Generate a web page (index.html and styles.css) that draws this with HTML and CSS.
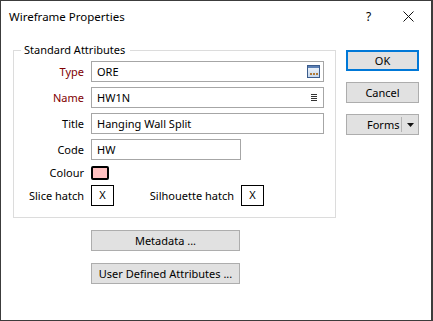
FILE: index.html
```html
<!DOCTYPE html>
<html>
<head>
<meta charset="utf-8">
<link rel="stylesheet" href="styles.css">
</head>
<body>
<div class="window">
  <div class="titlebar">
    <span class="title">Wireframe Properties</span>
    <span class="help">?</span>
    <span class="close">
      <svg width="11" height="11" viewBox="0 0 11 11"><path d="M0.5 0.5 L10.5 10.5 M10.5 0.5 L0.5 10.5" stroke="#111" stroke-width="1" fill="none"/></svg>
    </span>
  </div>
  <div class="content">
    <div class="main">
      <fieldset class="group">
        <legend>Standard Attributes</legend>
        <div class="form">
          <label class="lbl req">Type</label>
          <div class="field full"><span class="val">ORE</span>
            <svg class="ico-browse" width="13" height="13" viewBox="0 0 13 13">
              <defs><linearGradient id="g" x1="0" y1="0" x2="0" y2="1"><stop offset="0" stop-color="#f4f8fc"/><stop offset="1" stop-color="#c4d6ec"/></linearGradient></defs>
              <rect x="0.5" y="0.5" width="12" height="12" fill="url(#g)" stroke="#3b5c8c"/>
              <rect x="1" y="1" width="11" height="2" fill="#5b7fb4"/>
              <rect x="3" y="8" width="2" height="2" fill="#b07a3a"/>
              <rect x="6" y="8" width="2" height="2" fill="#b07a3a"/>
              <rect x="9" y="8" width="2" height="2" fill="#b07a3a"/>
            </svg>
          </div>
          <label class="lbl req">Name</label>
          <div class="field full"><span class="val">HW1N</span>
            <svg class="ico-list" width="6" height="7" viewBox="0 0 6 7">
              <rect x="0" y="0" width="6" height="1" fill="#333"/>
              <rect x="0" y="2" width="6" height="1" fill="#333"/>
              <rect x="0" y="4" width="6" height="1" fill="#333"/>
              <rect x="0" y="6" width="6" height="1" fill="#333"/>
            </svg>
          </div>
          <label class="lbl">Title</label>
          <div class="field full"><span class="val">Hanging Wall Split</span></div>
          <label class="lbl">Code</label>
          <div class="field code"><span class="val">HW</span></div>
          <label class="lbl">Colour</label>
          <div class="colour-cell"><span class="swatch"></span></div>
          <label class="lbl">Slice hatch</label>
          <div class="hatch-row">
            <span class="hatch">X</span>
            <span class="lbl sil">Silhouette hatch</span>
            <span class="hatch">X</span>
          </div>
        </div>
      </fieldset>
      <div class="extra">
        <button class="btn wide">Metadata ...</button>
        <button class="btn wide">User Defined Attributes ...</button>
      </div>
    </div>
    <div class="side">
      <button class="btn side-btn ok">OK</button>
      <button class="btn side-btn">Cancel</button>
      <button class="btn side-btn forms"><span class="forms-text">Forms</span><span class="sep"></span>
        <svg class="arrow" width="7" height="4" viewBox="0 0 7 4"><path d="M0 0 H7 L3.5 4 Z" fill="#111"/></svg>
      </button>
    </div>
  </div>
</div>
</body>
</html>
```

FILE: styles.css
```css
html, body {
  margin: 0;
  padding: 0;
  background: #ffffff;
}
.window {
  width: 433px;
  height: 321px;
  box-sizing: border-box;
  border: 1px solid #3c3c3c;
  border-right-width: 2px;
  background: #ffffff;
  font-family: "Noto Sans", "Open Sans", sans-serif;
  font-size: 11px;
  color: #000;
}
.titlebar {
  height: 29px;
  display: flex;
  align-items: center;
  padding-left: 8px;
}
.title {
  flex: 1;
  font-size: 11.5px;
  line-height: 16px;
  padding-top: 2px;
}
.help {
  width: 12px;
  font-size: 12px;
  padding-top: 2px;
  margin-right: 25px;
}
.close {
  display: flex;
  margin-right: 17px;
  padding-top: 1px;
}
.content {
  display: flex;
  padding-top: 12px;
  padding-left: 12px;
}
.main {
  width: 323px;
}
.group {
  margin: 0;
  padding: 3px 0 11px 0;
  border: 1px solid #dcdcdc;
  min-width: 0;
}
.group legend {
  margin-left: 7px;
  padding: 0 5px 0 3px;
  line-height: 16px;
}
.form {
  display: grid;
  grid-template-columns: 70px 1fr;
  grid-template-rows: 21px 21px 21px 21px 15px 21px;
  column-gap: 7px;
  row-gap: 5px;
  align-items: center;
}
.lbl {
  text-align: right;
  line-height: 16px;
  white-space: nowrap;
}
.req {
  color: #800000;
}
.field {
  box-sizing: border-box;
  height: 21px;
  border: 1px solid #a6a6a6;
  display: flex;
  align-items: center;
  padding-left: 5px;
  padding-right: 3px;
}
.field.full {
  width: 233px;
}
.field.code {
  width: 150px;
}
.val {
  flex: 1;
  line-height: 16px;
}
.ico-list {
  margin-right: 3px;
}
.colour-cell {
  height: 15px;
}
.swatch {
  display: block;
  box-sizing: border-box;
  width: 18px;
  height: 14px;
  margin-top: 1px;
  border: 2px solid #000;
  border-radius: 2px;
  background: #ffc0c0;
}
.hatch-row {
  display: flex;
  align-items: center;
  column-gap: 7px;
}
.hatch {
  box-sizing: border-box;
  width: 23px;
  height: 21px;
  border: 1px solid #000;
  display: flex;
  align-items: center;
  justify-content: center;
  line-height: 16px;
  padding-bottom: 2px;
}
.sil {
  width: 113px;
}
.extra {
  display: flex;
  flex-direction: column;
  gap: 12px;
  padding-top: 12px;
  padding-left: 78px;
}
.btn {
  box-sizing: border-box;
  height: 21px;
  margin: 0;
  padding: 0;
  border: 1px solid #adadad;
  background: #e1e1e1;
  font-family: "Noto Sans", "Open Sans", sans-serif;
  font-size: 11px;
  line-height: 16px;
  color: #000;
}
.btn.wide {
  width: 149px;
}
.side {
  display: flex;
  flex-direction: column;
  gap: 11px;
  padding-top: 8px;
  margin-left: 10px;
}
.side-btn {
  width: 73px;
}
.ok {
  border: 2px solid #0078d7;
}
.forms {
  display: flex;
  align-items: center;
  padding-left: 20px;
}
.forms-text {
  width: 34px;
  text-align: left;
}
.sep {
  width: 1px;
  height: 15px;
  background: #b4b4b4;
  margin-left: 0;
  margin-right: 5px;
}
```
